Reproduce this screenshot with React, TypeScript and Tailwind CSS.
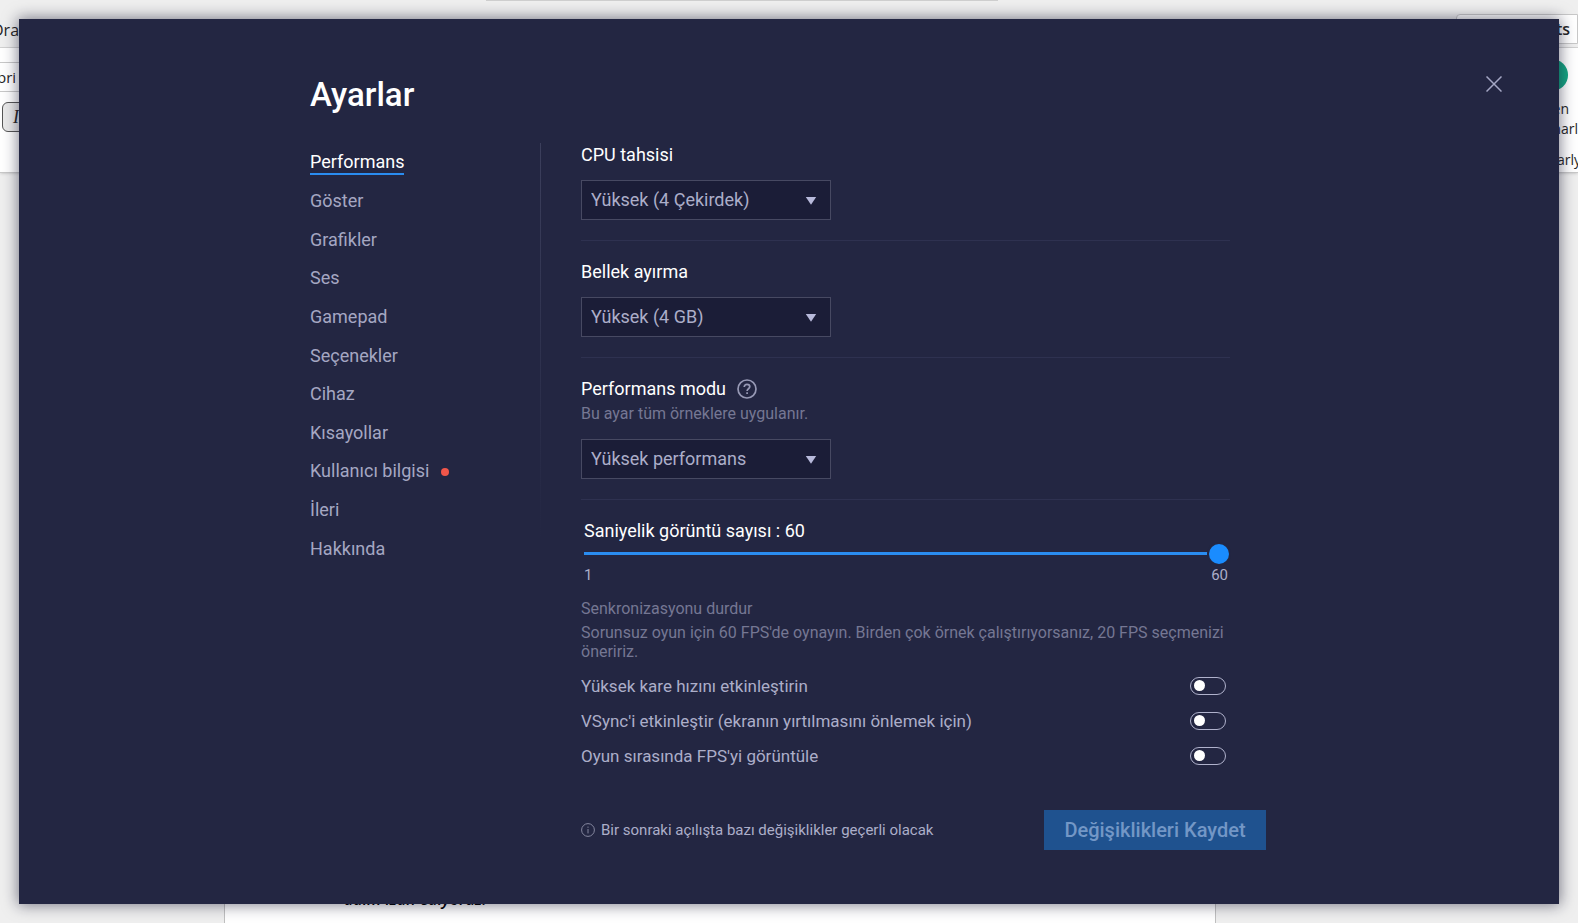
import React, { useState } from 'react';

type NavItem = { label: string; badge?: boolean };

const NAV_ITEMS: NavItem[] = [
  { label: 'Performans' },
  { label: 'Göster' },
  { label: 'Grafikler' },
  { label: 'Ses' },
  { label: 'Gamepad' },
  { label: 'Seçenekler' },
  { label: 'Cihaz' },
  { label: 'Kısayollar' },
  { label: 'Kullanıcı bilgisi', badge: true },
  { label: 'İleri' },
  { label: 'Hakkında' },
];

const TOGGLES = [
  { id: 'high-fps', label: 'Yüksek kare hızını etkinleştirin' },
  { id: 'vsync', label: "VSync'i etkinleştir (ekranın yırtılmasını önlemek için)" },
  { id: 'show-fps', label: "Oyun sırasında FPS'yi görüntüle" },
];

/* ===== document window behind the dialog ===== */
const Backdrop: React.FC = () => (
  <div
    aria-hidden="true"
    className="absolute inset-0 flex flex-col justify-between overflow-hidden bg-[#efefef] font-['Open_Sans',sans-serif] text-[#262626]"
  >
    <div>
      <div className="flex h-[48px] items-start justify-between border-b border-[#d4d4d4]">
        <span className="-ml-2 w-9 pt-[18px] text-base leading-6">Draw</span>
        <div className="h-px w-[512px] bg-[#cfcfcf]" />
        <div className="mt-[14px] flex h-[30px] w-[122px] items-center justify-end rounded-l border border-[#c8c8c8] bg-white pr-[7px] text-base font-semibold">
          Comments
        </div>
      </div>
      <div className="flex h-[125px] justify-between border-b border-[#c8c8c8] bg-white shadow">
        <div className="w-20 pt-[14px]">
          <div className="flex h-[30px] items-center border-y border-[#c8c8c8] text-[15px]">
            <span className="-ml-[3px]">bri</span>
          </div>
          <div className="mt-[10px] ml-[2px] flex h-[30px] items-center rounded-md border border-[#555] bg-[#eaeaea] pl-[10px] font-['Liberation_Serif',serif] text-lg italic">
            I
          </div>
        </div>
        <div className="flex w-[60px] flex-col pt-[11px] text-sm leading-5">
          <div className="ml-[18px] flex size-8 items-center justify-center self-start rounded-full bg-[#15a683] text-white">
            G
          </div>
          <span className="mt-2 self-end pr-[9px]">Open</span>
          <span className="self-end">Gramarl</span>
          <span className="-mr-[3px] mt-[11px] self-end">Gramarly</span>
        </div>
      </div>
    </div>
    <div className="mx-auto flex h-10 w-[992px] -translate-x-[69px] items-start border-x border-[#c0c0c0] bg-white pt-1 pl-[119px] text-base leading-6 font-semibold italic text-black">
      adım izah ediyoruz.
    </div>
  </div>
);

const SelectBox: React.FC<{ id: string; value: string }> = ({ id, value }) => (
  <div className="relative h-10 w-[250px]">
    <select
      id={id}
      defaultValue={value}
      className="h-full w-full appearance-none rounded-none border border-[#474962] bg-[#1b1d37] pr-8 pl-[9px] text-lg text-[#acaec9] outline-none"
    >
      <option>{value}</option>
    </select>
    <svg viewBox="0 0 12 8" className="pointer-events-none absolute top-[17px] right-[14px] h-2 w-3" fill="#b8badb">
      <path d="M.8 0h10.4L6 7.8z" />
    </svg>
  </div>
);

const Toggle: React.FC<{ id: string; label: string }> = ({ id, label }) => (
  <div className="flex h-[35px] items-center justify-between pr-1">
    <label htmlFor={id} className="text-[17px] leading-5 text-[#acaec9]">
      {label}
    </label>
    <input
      id={id}
      type="checkbox"
      role="switch"
      className="flex h-[18px] w-9 appearance-none items-center rounded-full border border-[#b0b2cc] pl-[3px] before:size-[11px] before:rounded-full before:bg-white checked:justify-end checked:bg-[#1a8cff] checked:pr-[3px]"
    />
  </div>
);

const App: React.FC = () => {
  const [active, setActive] = useState('Performans');
  const [fps, setFps] = useState(60);

  return (
    <div className="relative flex min-h-screen flex-col p-[19px] font-[Roboto,sans-serif]">
      <Backdrop />

      {/* ================= DIALOG ================= */}
      <div
        role="dialog"
        aria-labelledby="settings-title"
        className="relative grid flex-1 grid-cols-[1fr_minmax(0,958px)_1fr] bg-[#232642] pt-[56px] pb-[50px] shadow-[0_0_14px_1px_rgba(20,20,45,0.55)]"
      >
        <div />

        <div>
          <h1 id="settings-title" className="text-[33px] leading-10 font-medium text-white">
            Ayarlar
          </h1>

          <div className="mt-7 flex">
            {/* ================= NAV ================= */}
            <nav className="flex h-[426px] w-[230px] flex-col pt-px">
              {NAV_ITEMS.map(item => (
                <div key={item.label} className="flex flex-1 items-center gap-3">
                  <a
                    href="#"
                    onClick={() => setActive(item.label)}
                    className={`border-b-2 text-lg leading-[22px]
                      ${active === item.label
                        ? 'border-[#2a8cf0] text-white'
                        : 'border-transparent text-[#a5a7c2]'}
                    `}
                  >
                    {item.label}
                  </a>
                  {item.badge && <span className="size-2 rounded-full bg-[#f0564a]" />}
                </div>
              ))}
            </nav>
            <div className="h-[400px] w-px bg-linear-to-b from-[#3c3f5c] to-[#232642]" />

            {/* ================= SETTINGS ================= */}
            <div className="min-w-0 flex-1 pl-[40px]">
              <div className="mr-[38px]">
                <section className="border-b border-[#2e3150] pb-5">
                  <label htmlFor="cpu" className="mb-[13px] block text-lg leading-6 text-white">
                    CPU tahsisi
                  </label>
                  <SelectBox id="cpu" value="Yüksek (4 Çekirdek)" />
                </section>

                <section className="border-b border-[#2e3150] pt-[19px] pb-5">
                  <label htmlFor="memory" className="mb-[13px] block text-lg leading-6 text-white">
                    Bellek ayırma
                  </label>
                  <SelectBox id="memory" value="Yüksek (4 GB)" />
                </section>

                <section className="border-b border-[#2e3150] pt-[19px] pb-5">
                  <div className="flex items-center gap-[11px]">
                    <label htmlFor="mode" className="text-lg leading-6 text-white">
                      Performans modu
                    </label>
                    <button type="button" aria-label="Yardım">
                      <svg viewBox="0 0 20 20" className="size-5" fill="none" stroke="#9799b5" strokeWidth="1.7">
                        <circle cx="10" cy="10" r="9" />
                        <path d="M7.2 8.1c0-1.7 1.2-2.7 2.8-2.7s2.8 1 2.8 2.4c0 1.9-2.7 2-2.7 4.1M10.1 13.3v1.7" />
                      </svg>
                    </button>
                  </div>
                  <p className="mt-[3px] mb-[15px] text-base leading-5 text-[#757793]">Bu ayar tüm örneklere uygulanır.</p>
                  <SelectBox id="mode" value="Yüksek performans" />
                </section>

                <section className="pt-[19px]">
                  <div className="pl-[3px]">
                    <label htmlFor="fps" className="block text-lg leading-6 text-white">
                      Saniyelik görüntü sayısı : {fps}
                    </label>
                    <div className="pr-px">
                      <input
                        id="fps"
                        type="range"
                        min={1}
                        max={60}
                        value={fps}
                        onChange={e => setFps(Number(e.target.value))}
                        className="block h-5 w-full appearance-none bg-transparent [&::-webkit-slider-runnable-track]:h-[3px] [&::-webkit-slider-runnable-track]:bg-[#2a8cf0] [&::-webkit-slider-thumb]:-mt-[8px] [&::-webkit-slider-thumb]:size-5 [&::-webkit-slider-thumb]:appearance-none [&::-webkit-slider-thumb]:rounded-full [&::-webkit-slider-thumb]:bg-[#1a8cff] [&::-webkit-slider-thumb]:shadow-[0_0_0_2px_#232642]"
                      />
                    </div>
                    <div className="mt-[2px] flex justify-between pr-[2px] text-[15px] leading-5 text-[#acaec9]">
                      <span>1</span>
                      <span>60</span>
                    </div>
                  </div>

                  <p className="mt-[14px] text-base leading-5 text-[#757793]">Senkronizasyonu durdur</p>
                  <p className="mt-1 mb-[7px] text-base leading-[19px] text-[#757793]">
                    Sorunsuz oyun için 60 FPS'de oynayın. Birden çok örnek çalıştırıyorsanız, 20 FPS seçmenizi öneririz.
                  </p>

                  {TOGGLES.map(toggle => (
                    <Toggle key={toggle.id} id={toggle.id} label={toggle.label} />
                  ))}
                </section>
              </div>

              {/* ================= FOOTER ================= */}
              <div className="mt-[37px] mr-[2px] flex items-center justify-between">
                <p className="flex items-center gap-[6px] text-[15px] leading-5 text-[#acaec9]">
                  <svg viewBox="0 0 14 14" className="size-[14px]" fill="none" stroke="#85879f">
                    <circle cx="7" cy="7" r="6.4" />
                    <path d="M7 3.6v1.2M7 6v4.4" />
                  </svg>
                  Bir sonraki açılışta bazı değişiklikler geçerli olacak
                </p>
                <button
                  type="button"
                  disabled
                  className="h-10 w-[222px] bg-[#1f528f] text-xl font-medium text-[#7397c6]"
                >
                  Değişiklikleri Kaydet
                </button>
              </div>
            </div>
          </div>
        </div>

        <div className="flex items-start justify-end pr-[57px]">
          <button type="button" aria-label="Kapat" className="mt-px">
            <svg viewBox="0 0 16 16" className="size-4" fill="none" stroke="#a5a7c4" strokeWidth="1.5">
              <path d="M.5.5l15 15M15.5.5l-15 15" />
            </svg>
          </button>
        </div>
      </div>
    </div>
  );
};

export default App;
